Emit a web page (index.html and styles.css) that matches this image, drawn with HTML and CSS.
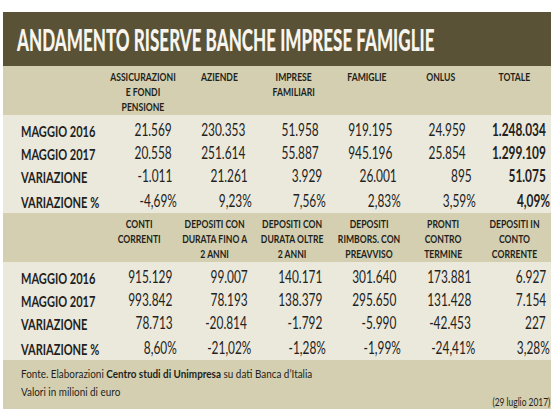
FILE: index.html
```html
<!DOCTYPE html>
<html lang="it">
<head>
    <meta charset="UTF-8">
    <meta name="viewport" content="width=device-width, initial-scale=1.0">
    <title>Andamento riserve banche imprese famiglie</title>
    <link rel="stylesheet" href="styles.css">
</head>
<body>

    <h1 class="title"><span>ANDAMENTO RISERVE BANCHE IMPRESE FAMIGLIE</span></h1>

    <!-- Prima tabella: per settore -->
    <div class="heads">
        <div></div>
        <div class="head"><span>ASSICURAZIONI<br>E FONDI<br>PENSIONE</span></div>
        <div class="head"><span>AZIENDE</span></div>
        <div class="head"><span>IMPRESE<br>FAMILIARI</span></div>
        <div class="head"><span>FAMIGLIE</span></div>
        <div class="head"><span>ONLUS</span></div>
        <div class="head"><span>TOTALE</span></div>
    </div>
    <div class="rows">
        <div class="row">
            <div class="label"><span>MAGGIO 2016</span></div>
            <div class="num"><span>21.569</span></div>
            <div class="num"><span>230.353</span></div>
            <div class="num"><span>51.958</span></div>
            <div class="num"><span>919.195</span></div>
            <div class="num"><span>24.959</span></div>
            <div class="num total"><span>1.248.034</span></div>
        </div>
        <div class="row">
            <div class="label"><span>MAGGIO 2017</span></div>
            <div class="num"><span>20.558</span></div>
            <div class="num"><span>251.614</span></div>
            <div class="num"><span>55.887</span></div>
            <div class="num"><span>945.196</span></div>
            <div class="num"><span>25.854</span></div>
            <div class="num total"><span>1.299.109</span></div>
        </div>
        <div class="row">
            <div class="label"><span>VARIAZIONE</span></div>
            <div class="num"><span>-1.011</span></div>
            <div class="num"><span>21.261</span></div>
            <div class="num"><span>3.929</span></div>
            <div class="num"><span>26.001</span></div>
            <div class="num"><span>895</span></div>
            <div class="num total"><span>51.075</span></div>
        </div>
        <div class="row pct">
            <div class="label"><span>VARIAZIONE %</span></div>
            <div class="num"><span>-4,69%</span></div>
            <div class="num"><span>9,23%</span></div>
            <div class="num"><span>7,56%</span></div>
            <div class="num"><span>2,83%</span></div>
            <div class="num"><span>3,59%</span></div>
            <div class="num total"><span>4,09%</span></div>
        </div>
    </div>

    <!-- Seconda tabella: per tipo di deposito -->
    <div class="heads">
        <div></div>
        <div class="head"><span>CONTI<br>CORRENTI</span></div>
        <div class="head"><span>DEPOSITI CON<br>DURATA FINO A<br>2 ANNI</span></div>
        <div class="head"><span>DEPOSITI CON<br>DURATA OLTRE<br>2 ANNI</span></div>
        <div class="head"><span>DEPOSITI<br>RIMBORS. CON<br>PREAVVISO</span></div>
        <div class="head"><span>PRONTI<br>CONTRO<br>TERMINE</span></div>
        <div class="head"><span>DEPOSITI IN<br>CONTO<br>CORRENTE</span></div>
    </div>
    <div class="rows">
        <div class="row">
            <div class="label"><span>MAGGIO 2016</span></div>
            <div class="num"><span>915.129</span></div>
            <div class="num"><span>99.007</span></div>
            <div class="num"><span>140.171</span></div>
            <div class="num"><span>301.640</span></div>
            <div class="num"><span>173.881</span></div>
            <div class="num"><span>6.927</span></div>
        </div>
        <div class="row">
            <div class="label"><span>MAGGIO 2017</span></div>
            <div class="num"><span>993.842</span></div>
            <div class="num"><span>78.193</span></div>
            <div class="num"><span>138.379</span></div>
            <div class="num"><span>295.650</span></div>
            <div class="num"><span>131.428</span></div>
            <div class="num"><span>7.154</span></div>
        </div>
        <div class="row">
            <div class="label"><span>VARIAZIONE</span></div>
            <div class="num"><span>78.713</span></div>
            <div class="num"><span>-20.814</span></div>
            <div class="num"><span>-1.792</span></div>
            <div class="num"><span>-5.990</span></div>
            <div class="num"><span>-42.453</span></div>
            <div class="num"><span>227</span></div>
        </div>
        <div class="row pct">
            <div class="label"><span>VARIAZIONE %</span></div>
            <div class="num"><span>8,60%</span></div>
            <div class="num"><span>-21,02%</span></div>
            <div class="num"><span>-1,28%</span></div>
            <div class="num"><span>-1,99%</span></div>
            <div class="num"><span>-24,41%</span></div>
            <div class="num"><span>3,28%</span></div>
        </div>
    </div>

    <div class="foot">
        <div class="notes">
            <div>Fonte. Elaborazioni <b>Centro studi di Unimpresa</b> su dati Banca d’Italia</div>
            <div>Valori in milioni di euro</div>
        </div>
        <div class="date">(29 luglio 2017)</div>
    </div>

</body>
</html>
```

FILE: styles.css
```css
body {
    margin: 12px 4px 0 3px;
    background-color: white;
    font-family: Lato, "DejaVu Sans", sans-serif;
    color: #231f1c;
}
.title {
    margin: 0;
    height: 54px;
    line-height: 54px;
    padding-left: 14px;
    background-color: #5a5236;
    color: #f7f5ee;
    font-size: 31px;
    font-weight: 900;
    white-space: nowrap;
    overflow: hidden;
}
.title span {
    display: inline-block;
    transform: scaleX(.55);
    transform-origin: left center;
}
.heads, .row {
    display: grid;
    grid-template-columns: 100px repeat(6, 1fr);
}
.heads {
    background-color: #d4cfb0;
    padding-top: 4px;
    height: 45px;
    overflow: hidden;
}
.head {
    display: flex;
    justify-content: center;
    font-size: 10.5px;
    font-weight: 700;
    line-height: 15px;
}
.head span {
    flex: none;
    text-align: center;
    white-space: nowrap;
    transform: scaleX(.82);
}
.rows {
    background-color: #ebe8dc;
    padding-top: 4px;
}
.row {
    line-height: 23px;
    font-size: 16.5px;
}
.row.pct {
    margin-top: 2px;
}
.label {
    display: flex;
    padding-left: 18px;
    font-size: 16px;
    font-weight: 700;
}
.num {
    display: flex;
    justify-content: flex-end;
    padding-right: 5px;
}
.pct .num {
    padding-right: 1px;
}
.label span, .num span {
    flex: none;
    white-space: nowrap;
    transform: scaleX(.72);
}
.label span {
    transform: scaleX(.69);
    transform-origin: left center;
}
.num span {
    transform-origin: right center;
}
.total {
    font-weight: 700;
}
.foot {
    display: flex;
    justify-content: space-between;
    align-items: flex-end;
    background-color: #d4cfb0;
    padding: 5px 1px 0 18px;
    font-size: 11px;
}
.notes {
    line-height: 18px;
    padding-bottom: 8px;
    white-space: nowrap;
    transform: scaleX(.9);
    transform-origin: left center;
}
.date {
    font-size: 10.5px;
    line-height: 14px;
    white-space: nowrap;
    transform: scaleX(.8);
    transform-origin: right center;
}
```
